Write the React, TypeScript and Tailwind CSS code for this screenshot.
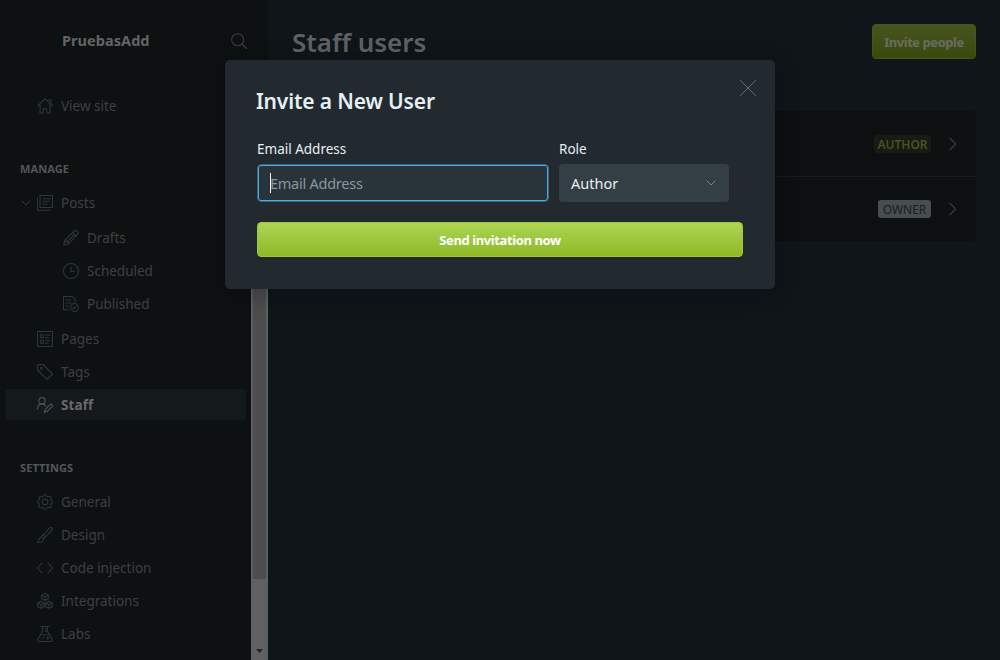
import type { ReactNode } from "react";

const icons: Record<string, ReactNode> = {
  home: <path d="M.75 12 12 1l11.250 11M17 3h4v6M4.500 10.500V22.500H9.500V16h5v6.500h5V10.500" />,
  posts: <path d="M4.500.750h18.750v18H4.500zM.750 4v19H20M8.500 5.500h10.500M8.500 9.500h10.500M8.500 13.500H15" />,
  pen: <path d="M1 23l2-8L16.500 2c1.500-1.500 3.500-1.500 5 0s1.500 3.500 0 5L8.500 20.500 1 23zM3 15l5.500 5.500M14.500 4l5.500 5.500M6 18 17.500 6.500" />,
  clock: <path d="M12 .800a11.200 11.200 0 1 0 0 22.400 11.200 11.200 0 0 0 0-22.400M12 6v6.500h5.500" />,
  published: (
    <>
      <path d="M8.500 20.500H.750V.750H14L18 5v4M4.500 6h7M4.500 10.500h8M4.500 15h4" />
      <circle cx="17.300" cy="17.300" r="5.900" />
      <path d="m14.500 17.500 2 2 3.500-4" />
    </>
  ),
  pages: (
    <path d="M.750.750h22.500v22.500H.750zM5 5.500h4.500V10H5zM5 14h4.500v4.500H5zM12.500 6H19M12.500 10H17M12.500 14.500H19M12.500 18.500H17" />
  ),
  tag: (
    <>
      <path d="M.750 2.500V9L15 23.200 23.200 15 9 .750H2.500z" />
      <circle cx="6.500" cy="6.500" r="1.500" />
    </>
  ),
  staff: (
    <>
      <circle cx="7.500" cy="5.500" r="4.700" />
      <path d="M.750 18c0-5 3-7.500 6.750-7.500 2.500 0 4.500 1 5.500 3M11 23l1.500-4.500 7-7c1-1 2-1 3 0s1 2 0 3l-7 7z" />
    </>
  ),
  gear: (
    <>
      <circle cx="12" cy="12" r="4.300" />
      <path d="M9.700 2.700c.8-2.500 3.800-2.500 4.600 0 .5 1.500 1.700 2 3.100 1.300 2.300-1.100 4.400 1 3.300 3.300-.7 1.400-.2 2.500 1.300 3 2.500.800 2.500 2.700 0 3.500-1.500.5-2 1.700-1.300 3.100 1.100 2.300-1 4.400-3.300 3.300-1.400-.7-2.600-.2-3.100 1.300-.8 2.500-3.800 2.500-4.600 0-.5-1.500-1.700-2-3.100-1.300-2.300 1.100-4.400-1-3.300-3.300.7-1.400.2-2.600-1.300-3.100-2.500-.8-2.500-2.700 0-3.500 1.500-.5 2-1.600 1.300-3C2.200 5 4.300 2.900 6.600 4c1.400.7 2.600.2 3.100-1.300z" />
    </>
  ),
  brush: <path d="M1 23c2-1.500 1-4 2.500-6s4.500-1.500 5.500 0 .5 4-1.500 5S3 23.300 1 23zM6 15 18.500 2c1.500-1.500 3.200-1.200 4-.5s1 2.500-.5 4L9.500 17.500M9 11.500l4 3.500" />,
  code: <path d="M7.500 4.500.750 12l6.750 7.500M16.500 4.500 23.250 12l-6.750 7.500" />,
  cubes: (
    <path d="m12 .750 5 2.500v5.500l-5 2.500-5-2.500v-5.500zM7 3.500l5 2.500 5-2.500M12 6v5M6 12.500l5 2.500v5.500L6 23l-5-2.500V15zM1 15l5 2.500 5-2.500M6 17.500V23M18 12.500l5 2.500v5.500L18 23l-5-2.500V15zM13 15l5 2.500 5-2.500M18 17.500V23" />
  ),
  flask: (
    <path d="M6 .750h12M8.500.750V8L1.500 19.500c-1 2 0 3.700 2 3.700h17c2 0 3-1.700 2-3.700L15.500 8V.750M12 4.500h3.500M12 8h3.500M5 13h14M7 18.500v.1M10 16v2M14 18h4M16 16v4" />
  ),
  search: (
    <>
      <circle cx="10" cy="10" r="9" />
      <path d="m16.500 16.500 6.750 6.750" />
    </>
  ),
};

function Icon({ name, className = "" }: { name: string; className?: string }) {
  return (
    <svg
      viewBox="0 0 24 24"
      className={`size-4 shrink-0 fill-none stroke-[1.6] ${className}`}
      stroke="currentColor"
      strokeLinecap="round"
      strokeLinejoin="round"
    >
      {icons[name]}
    </svg>
  );
}

function Chevron({ className }: { className: string }) {
  return (
    <svg viewBox="0 0 10 6" className={`shrink-0 fill-none ${className}`} stroke="currentColor">
      <path d="m.5.5 4.500 4.500 4.500-4.500" />
    </svg>
  );
}

type ItemProps = { icon: string; label: string; active?: boolean; sub?: boolean; open?: boolean };

function NavItem({ icon, label, active, sub, open }: ItemProps) {
  return (
    <li
      className={`mb-0.5 ml-[5px] flex h-[31px] w-[241px] items-center rounded-[4px] pt-px ${
        sub ? "pl-[58px]" : open ? "pl-4" : "pl-8"
      } ${active ? "bg-[#14191c] text-[#68696a]" : "text-[#3d4042]"}`}
    >
      {open && <Chevron className="mr-1.5 h-1.5 w-2.5 text-[#30383c]" />}
      <Icon name={icon} className={active ? "text-[#54585a]" : "text-[#2e373c]"} />
      <span
        className={`ml-2 whitespace-nowrap text-[13.500px] leading-5 ${active ? "font-bold tracking-[0.1px]" : "tracking-[0px]"}`}
      >
        {label}
      </span>
    </li>
  );
}

function Heading({ children }: { children: ReactNode }) {
  return <h2 className="mb-2.5 ml-5 h-4 text-[11px] leading-4 font-bold tracking-[0.1px] text-[#535658]">{children}</h2>;
}

function Sidebar() {
  return (
    <nav className="flex h-full w-[268px] shrink-0 flex-col overflow-hidden bg-[#0d1112]">
      <div className="flex h-[81px] shrink-0 items-center justify-between pr-[21px] pl-[62px]">
        <span className="text-[14.500px] font-bold tracking-[0.050px] text-[#626465]">PruebasAdd</span>
        <Icon name="search" className="text-[#3b4043]" />
      </div>
      <div className="flex min-h-0 flex-1">
        <div className="w-[251px] overflow-hidden pt-[9px]">
          <ul className="mb-10">
            <NavItem icon="home" label="View site" />
          </ul>
          <Heading>MANAGE</Heading>
          <ul className="mb-10">
            <NavItem icon="posts" label="Posts" open />
            <li className="py-0.5">
              <ul>
                <NavItem icon="pen" label="Drafts" sub />
                <NavItem icon="clock" label="Scheduled" sub />
                <NavItem icon="published" label="Published" sub />
              </ul>
            </li>
            <NavItem icon="pages" label="Pages" />
            <NavItem icon="tag" label="Tags" />
            <NavItem icon="staff" label="Staff" active />
          </ul>
          <Heading>SETTINGS</Heading>
          <ul>
            <NavItem icon="gear" label="General" />
            <NavItem icon="brush" label="Design" />
            <NavItem icon="code" label="Code injection" />
            <NavItem icon="cubes" label="Integrations" />
            <NavItem icon="flask" label="Labs" />
          </ul>
        </div>
        <Scrollbar />
      </div>
    </nav>
  );
}

function Scrollbar() {
  return (
    <div className="flex h-full w-[17px] shrink-0 flex-col items-center justify-between bg-[#606060] pt-[17px] pb-[7px]">
      <div className="h-[481px] w-[13px] bg-[#4d4d4d]" />
      <svg viewBox="0 0 7 4" className="h-1 w-[7px] fill-[#242424]">
        <path d="M0 0h7L3.500 4z" />
      </svg>
    </div>
  );
}

function Row({ children }: { children: ReactNode }) {
  return (
    <div className="flex items-center justify-end gap-[15px] pr-4">
      {children}
      <Chevron className="h-2 w-3.5 -rotate-90 stroke-[.8] text-[#3a3f42]" />
    </div>
  );
}

export default function App() {
  return (
    <div className="relative flex h-[660px] w-[1000px] overflow-hidden bg-[#0f1518] font-['Noto_Sans','Open_Sans',sans-serif]">
      <Sidebar />
      <main className="flex-1 px-6 pt-6">
        <header className="mb-[52px] flex h-[35px] items-center justify-between">
          <h1 className="pt-px text-[26px] font-semibold tracking-[-0.050px] text-[#5e6264]">Staff users</h1>
          <button className="h-[35px] w-[104px] rounded-[4px] border border-[#42551a] bg-linear-to-b from-[#46551f] to-[#3a490c] pt-0.5 text-[13px] font-bold tracking-[-0.45px] whitespace-nowrap text-[#696c60]">
            Invite people
          </button>
        </header>
        <section className="overflow-hidden rounded-[4px] bg-[#0c1011]">
          <div className="h-[66px] border-b border-[#161b1d] pt-6">
            <Row>
              <span className="flex h-[18px] w-[57px] items-center justify-center rounded-[3px] bg-[#161c14] pt-px text-[12px] font-semibold text-[#465322]">
                AUTHOR
              </span>
            </Row>
          </div>
          <div className="h-16 pt-[23px]">
            <Row>
              <span className="flex h-[18px] w-[53px] items-center justify-center rounded-[3px] bg-[#484d50] pt-px text-[12px] text-[#181d20]">
                OWNER
              </span>
            </Row>
          </div>
        </section>
      </main>

      <section
        role="dialog"
        className="absolute top-[60px] left-[225px] flex h-[229px] w-[550px] flex-col rounded-[5px] bg-[#222a30] pt-[27px] pr-8 pl-8 shadow-[0_4px_24px_rgba(0,0,0,0.3)]"
      >
        <header className="-mr-[14px] -ml-px flex h-7 items-start justify-between">
          <h2 className="text-[21px] leading-7 font-semibold tracking-[-0.15px] text-[#e5eff5]">Invite a New User</h2>
          <svg viewBox="0 0 18 18" className="mt-[-8px] size-[18px] fill-none stroke-[#747c80] stroke-[.8]">
            <path d="m1 1 16 16M17 1 1 17" />
          </svg>
        </header>
        <div className="mt-6 flex gap-2.5">
          <label className="w-[292px] text-[13.500px] leading-5 tracking-[0px] text-[#e5eff5]">
            Email Address
            <span className="mt-[5px] flex h-[38px] items-center rounded-[4px] border border-[#416075]">
              <span className="flex h-9 w-full items-center rounded-[3px] border border-[#43b0ef] bg-[#28333a] pl-[11px]">
                <span className="h-5 w-px bg-white" />
                <span className="-ml-px text-[14.500px] tracking-[-0.25px] text-[#8b979e]">Email Address</span>
              </span>
            </span>
          </label>
          <label className="w-[170px] text-[13.500px] leading-5 tracking-[0px] text-[#e5eff5]">
            Role
            <span className="mt-[5px] flex h-[38px] items-center justify-between rounded-[4px] bg-[#343f45] pr-[13px] pl-3">
              <span className="text-[14.500px] tracking-[0px] text-[#e5eff5]">Author</span>
              <Chevron className="h-1.5 w-2.5 text-[#718894]" />
            </span>
          </label>
        </div>
        <button className="mt-5 h-[35px] w-full rounded-[4px] border border-[#9dc93b] bg-linear-to-b from-[#add553] to-[#8fb925] pt-0.5 text-[13px] font-bold tracking-[-0.4px] text-white">
          Send invitation now
        </button>
      </section>
    </div>
  );
}
